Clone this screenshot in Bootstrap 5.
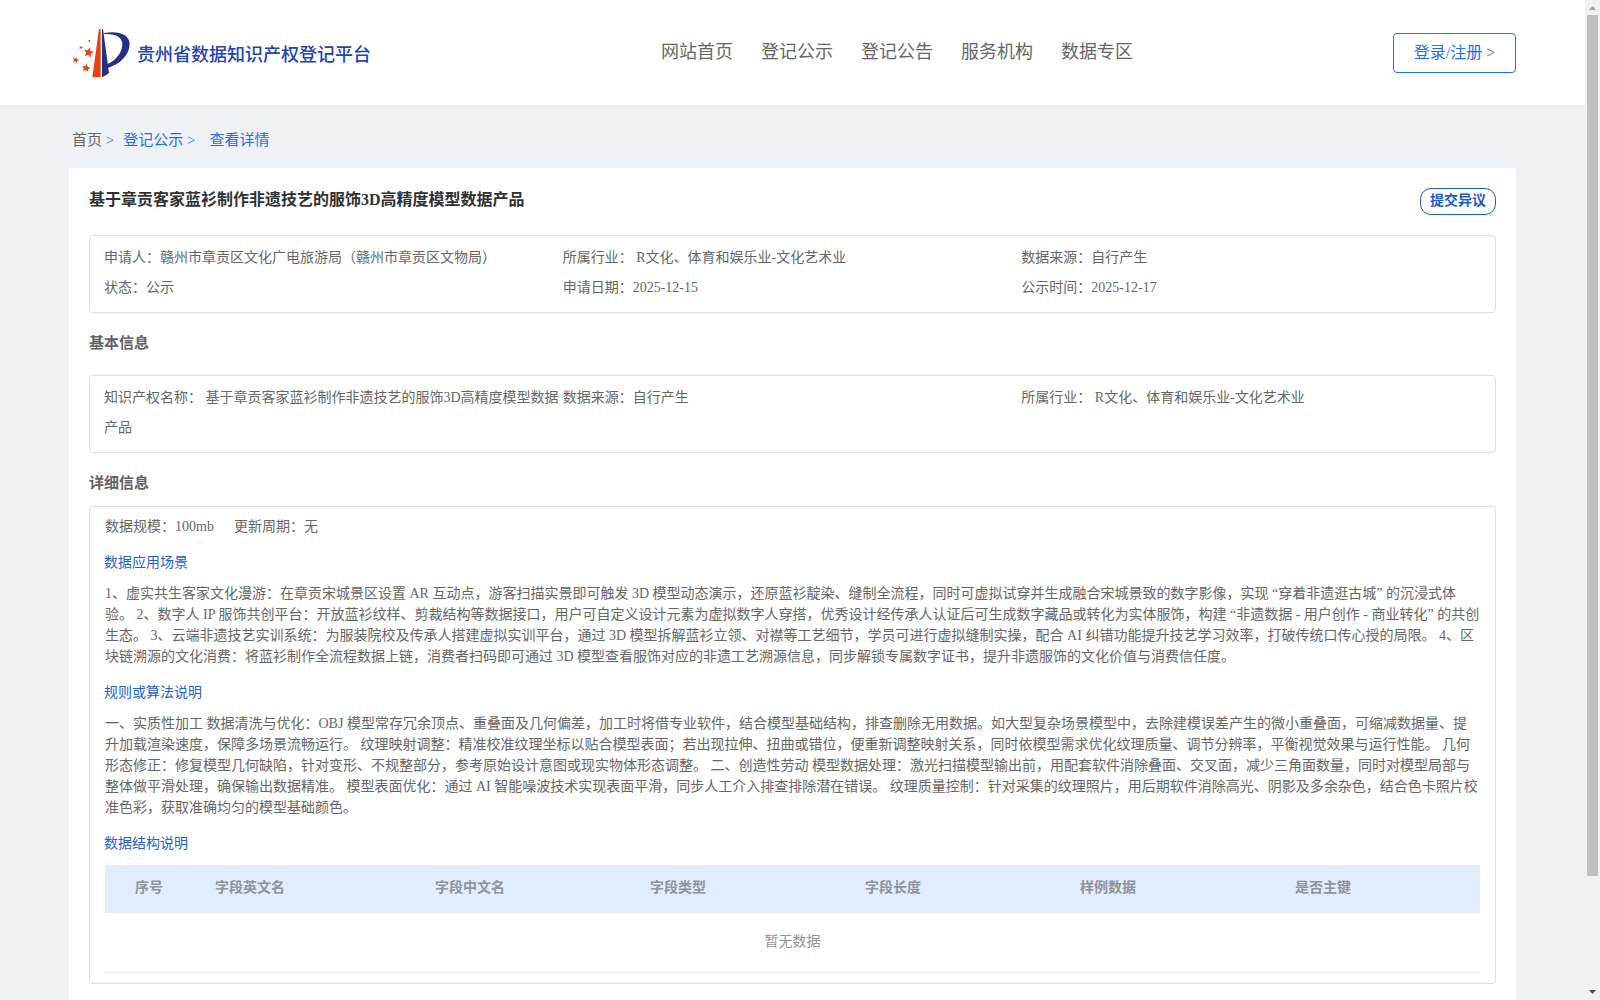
<!DOCTYPE html>
<html lang="zh-CN">
<head>
<meta charset="utf-8">
<meta name="viewport" content="width=device-width, initial-scale=1">
<title>贵州省数据知识产权登记平台</title>
<link href="https://cdn.jsdelivr.net/npm/bootstrap@5.3.0/dist/css/bootstrap.min.css" rel="stylesheet">
<style>
  body { font-family: "Liberation Serif", "Noto Sans CJK SC", serif; font-size: 14px; line-height: 21px; color: #666; background: #eef2f5; text-spacing-trim: space-all; }
  a { text-decoration: none; }
  .site-head { height: 105px; padding: 0 69px 0 70px; }
  .brand-side { width: 591px; padding-top: 2px; }
  .brand-name { font-size: 18px; font-weight: 500; color: #2043b8; margin-left: 5px; padding-top: 3px; white-space: nowrap; }
  .top-nav { gap: 28px; font-size: 18px; }
  .top-nav a { color: #666; line-height: 27px; }
  .login-btn { width: 123px; height: 40px; border: 1px solid #1a6ff0; border-radius: 4px; color: #1a6ff0; font-size: 16px; margin-top: 1px; padding-bottom: 1px; }
  .crumbs { height: 63px; padding: 8px 0 0 72px; font-size: 15px; color: #666; gap: 9px; }
  .crumbs a { color: #1a6ff0; }
  .crumbs .current { margin-left: 5px; }
  .sheet { margin: 0 69px; padding: 0 20px; height: 840px; }
  .sheet-head { height: 67px; padding-top: 20px; }
  .sheet-title { font-size: 16px; font-weight: 700; line-height: 24px; color: #303133; }
  .object-btn { width: 76px; height: 27px; border: 1px solid #1a5cc8; border-radius: 11px; color: #1a5cc8; font-weight: 700; padding-bottom: 2px; }
  .info-box { border: 1px solid #dcdee0; border-radius: 4px; padding: 7px 15px 9px 14px; line-height: 30px; }
  .part-title { font-size: 15px; font-weight: 700; line-height: 20px; color: #606266; padding-top: 20px; }
  .part-basic { height: 62px; }
  .part-detail { height: 53px; }
  .detail-box { border: 1px solid #dcdee0; border-radius: 4px; padding: 9px 15px; height: 478px; }
  .blue-title { color: #1f5fd0; line-height: 21px; margin: 15px 0 0 -1px; }
  .prose { white-space: nowrap; margin: 10px 0 0; }
  .fields { table-layout: fixed; width: 1375px; margin: 11px 0 0; color: #909399; --bs-table-bg: transparent; }
  .fields th { height: 47px; padding: 0 10px 1px; color: #909399; background: #e0edff; border-bottom: 1px solid #ebeef5; vertical-align: middle; font-weight: 700; }
  .fields th:first-child { padding-left: 30px; }
  .fields td { height: 60px; padding: 0 0 1px; color: #909399; text-align: center; vertical-align: middle; border-bottom: 1px solid #ebeef5; }
  .track { width: 15px; background: #f1f1f1; }
  .thumb { width: 11px; height: 861px; background: #c1c1c1; }
</style>
<script src="https://cdn.jsdelivr.net/npm/bootstrap@5.3.0/dist/js/bootstrap.bundle.min.js"></script>
</head>
<body>
<div class="d-flex vh-100 overflow-hidden">
  <div class="flex-grow-1 overflow-hidden">
    <header class="site-head bg-white d-flex align-items-center">
      <div class="brand-side d-flex align-items-center flex-shrink-0">
        <svg width="62" height="53" viewBox="60 51 186 159" aria-hidden="true">
          <path fill="#e8430f" d="M147 57H152V202H127Z"/>
          <path fill="#252f86" d="M156 57H159L177 189Q168 197 156 202Z"/>
          <path fill="#252f86" d="M163 69C204 61 239 73 239 102C238 137 208 164 174 173L172 163C200 150 217 126 217 103C217 82 200 71 163 72Z"/>
          <g fill="#e8430f">
            <path d="M120 112L121 123L132 126L122 131L123 143L115 134L104 138L109 128L102 119L113 121Z"/>
            <path d="M79 140L80 147L88 149L81 152L81 160L76 154L69 156L72 150L68 144L75 146Z"/>
            <path d="M111 161L113 171L123 173L114 178L115 187L108 180L98 184L102 175L96 168L105 169Z"/>
            <path d="M94 107L95 111L100 112L95 114L95 118L92 115L88 116L90 112L87 109L92 110Z"/>
            <path d="M120 89L120 92L124 93L120 94L120 97L118 95L115 96L116 93L114 91L118 91Z"/>
          </g>
        </svg>
        <span class="brand-name">贵州省数据知识产权登记平台</span>
      </div>
      <nav class="top-nav d-flex">
        <a href="#">网站首页</a><a href="#">登记公示</a><a href="#">登记公告</a><a href="#">服务机构</a><a href="#">数据专区</a>
      </nav>
      <a href="#" class="login-btn ms-auto d-flex align-items-center justify-content-center">登录/注册 &gt;</a>
    </header>

    <nav class="crumbs d-flex align-items-center"><span>首页 &gt;</span><a href="#">登记公示 &gt;</a><a href="#" class="current">查看详情</a></nav>

    <main class="sheet bg-white">
      <div class="sheet-head d-flex justify-content-between align-items-start">
        <h1 class="sheet-title m-0">基于章贡客家蓝衫制作非遗技艺的服饰3D高精度模型数据产品</h1>
        <a href="#" class="object-btn d-flex align-items-center justify-content-center">提交异议</a>
      </div>

      <div class="info-box">
        <div class="row g-0">
          <div class="col-4">申请人：赣州市章贡区文化广电旅游局（赣州市章贡区文物局）</div>
          <div class="col-4">所属行业： R文化、体育和娱乐业-文化艺术业</div>
          <div class="col-4">数据来源：自行产生</div>
          <div class="col-4">状态：公示</div>
          <div class="col-4">申请日期：2025-12-15</div>
          <div class="col-4">公示时间：2025-12-17</div>
        </div>
      </div>

      <h2 class="part-title part-basic m-0">基本信息</h2>
      <div class="info-box">
        <div class="row g-0">
          <div class="col-4">知识产权名称： 基于章贡客家蓝衫制作非遗技艺的服饰3D高精度模型数据产品</div>
          <div class="col-4">数据来源：自行产生</div>
          <div class="col-4">所属行业： R文化、体育和娱乐业-文化艺术业</div>
        </div>
      </div>

      <h2 class="part-title part-detail m-0">详细信息</h2>
      <div class="detail-box">
        <div class="d-flex"><span>数据规模：100mb</span><span class="ms-3 ps-1">更新周期：无</span></div>
        <div class="blue-title">数据应用场景</div>
        <p class="prose">1、虚实共生客家文化漫游：在章贡宋城景区设置 AR 互动点，游客扫描实景即可触发 3D 模型动态演示，还原蓝衫靛染、缝制全流程，同时可虚拟试穿并生成融合宋城景致的数字影像，实现 “穿着非遗逛古城” 的沉浸式体<br>验。 2、数字人 IP 服饰共创平台：开放蓝衫纹样、剪裁结构等数据接口，用户可自定义设计元素为虚拟数字人穿搭，优秀设计经传承人认证后可生成数字藏品或转化为实体服饰，构建 “非遗数据 - 用户创作 - 商业转化” 的共创<br>生态。 3、云端非遗技艺实训系统：为服装院校及传承人搭建虚拟实训平台，通过 3D 模型拆解蓝衫立领、对襟等工艺细节，学员可进行虚拟缝制实操，配合 AI 纠错功能提升技艺学习效率，打破传统口传心授的局限。 4、区<br>块链溯源的文化消费：将蓝衫制作全流程数据上链，消费者扫码即可通过 3D 模型查看服饰对应的非遗工艺溯源信息，同步解锁专属数字证书，提升非遗服饰的文化价值与消费信任度。</p>
        <div class="blue-title">规则或算法说明</div>
        <p class="prose">一、实质性加工 数据清洗与优化：OBJ 模型常存冗余顶点、重叠面及几何偏差，加工时将借专业软件，结合模型基础结构，排查删除无用数据。如大型复杂场景模型中，去除建模误差产生的微小重叠面，可缩减数据量、提<br>升加载渲染速度，保障多场景流畅运行。 纹理映射调整：精准校准纹理坐标以贴合模型表面；若出现拉伸、扭曲或错位，便重新调整映射关系，同时依模型需求优化纹理质量、调节分辨率，平衡视觉效果与运行性能。 几何<br>形态修正：修复模型几何缺陷，针对变形、不规整部分，参考原始设计意图或现实物体形态调整。 二、创造性劳动 模型数据处理：激光扫描模型输出前，用配套软件消除叠面、交叉面，减少三角面数量，同时对模型局部与<br>整体做平滑处理，确保输出数据精准。 模型表面优化：通过 AI 智能噪波技术实现表面平滑，同步人工介入排查排除潜在错误。 纹理质量控制：针对采集的纹理照片，用后期软件消除高光、阴影及多余杂色，结合色卡照片校<br>准色彩，获取准确均匀的模型基础颜色。</p>
        <div class="blue-title">数据结构说明</div>
        <table class="table table-borderless fields">
          <colgroup><col style="width:100px"><col style="width:220px"><col style="width:215px"><col style="width:215px"><col style="width:215px"><col style="width:215px"><col style="width:195px"></colgroup>
          <thead><tr><th>序号</th><th>字段英文名</th><th>字段中文名</th><th>字段类型</th><th>字段长度</th><th>样例数据</th><th>是否主键</th></tr></thead>
          <tbody><tr><td colspan="7">暂无数据</td></tr></tbody>
        </table>
      </div>
    </main>
  </div>

  <div class="track flex-shrink-0 d-flex flex-column align-items-center" aria-hidden="true">
    <svg width="15" height="15" viewBox="0 0 15 15"><path fill="#a3a3a3" d="M4 10L7.500 6L11 10Z"/></svg>
    <div class="thumb"></div>
    <svg class="mt-auto" width="15" height="15" viewBox="0 0 15 15"><path fill="#505050" d="M4 5L7.500 9L11 5Z"/></svg>
  </div>
</div>
</body>
</html>
